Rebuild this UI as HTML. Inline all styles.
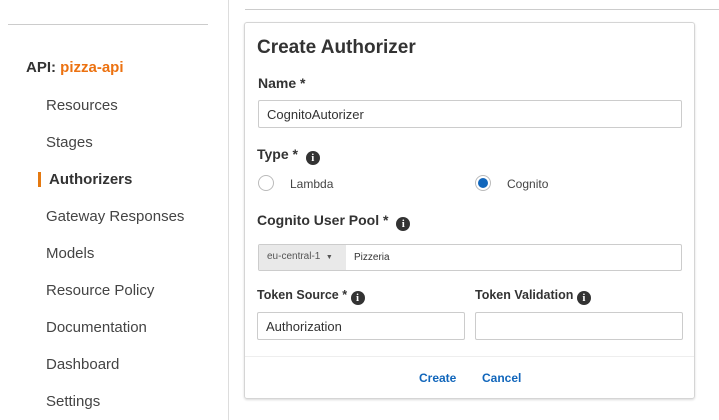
<!DOCTYPE html>
<html><head><style>
body{margin:0;width:719px;height:420px;background:#fff;font-family:"Liberation Sans",Arial,sans-serif;position:relative;overflow:hidden;color:#333}
.a{position:absolute;white-space:nowrap}
.nav{font-size:15px;color:#444;left:46px}
.lbl{font-weight:bold;font-size:14px;color:#333}
.inp{position:absolute;border:1px solid #ccc;border-radius:2px;box-sizing:border-box;background:#fff;font-size:13px;color:#333}
.i{display:inline-block;width:14px;height:14px;border-radius:50%;background:#333;color:#fff;font-size:11px;font-weight:bold;text-align:center;line-height:14px;font-family:"Liberation Serif",serif;vertical-align:-2px}
.r{position:absolute;width:16px;height:16px;border-radius:50%;border:1px solid #bbb;box-sizing:border-box;background:#fff}
</style></head><body>
<div class="a" style="left:8px;top:24px;width:200px;height:1px;background:#ccc"></div>
<div class="a" style="left:228px;top:0;width:1px;height:420px;background:#ddd"></div>
<div class="a" style="left:245px;top:9px;width:474px;height:1px;background:#ccc"></div>
<div class="a" style="left:26px;top:59px;font-size:15px;font-weight:bold;color:#333">API: <span style="color:#ec7211">pizza-api</span></div>
<div class="a nav" style="top:97px">Resources</div>
<div class="a nav" style="top:134px">Stages</div>
<div class="a" style="left:38px;top:172px;width:3px;height:15px;background:#e47911"></div>
<div class="a nav" style="top:171px;left:49px;font-weight:bold;color:#333">Authorizers</div>
<div class="a nav" style="top:208px">Gateway Responses</div>
<div class="a nav" style="top:245px">Models</div>
<div class="a nav" style="top:282px">Resource Policy</div>
<div class="a nav" style="top:319px">Documentation</div>
<div class="a nav" style="top:356px">Dashboard</div>
<div class="a nav" style="top:393px">Settings</div>

<div class="a" style="left:244px;top:22px;width:451px;height:377px;border:1px solid #d5d5d5;border-radius:3px;box-shadow:0 1px 2px rgba(0,0,0,.15);box-sizing:border-box"></div>
<div class="a" style="left:257px;top:37px;font-size:19px;font-weight:bold;color:#333">Create Authorizer</div>
<div class="a lbl" style="left:258px;top:75px">Name *</div>
<div class="inp" style="left:258px;top:100px;width:424px;height:28px;padding:6px 8px">CognitoAutorizer</div>
<div class="a lbl" style="left:257px;top:146px">Type * &nbsp;<span class="i">i</span></div>
<div class="r" style="left:258px;top:175px"></div>
<div class="a" style="left:290px;top:177px;font-size:12px;color:#444">Lambda</div>
<div class="r" style="left:475px;top:175px"><div style="position:absolute;left:2px;top:2px;width:10px;height:10px;border-radius:50%;background:#1166bb"></div></div>
<div class="a" style="left:507px;top:177px;font-size:12px;color:#444">Cognito</div>
<div class="a lbl" style="left:257px;top:212px">Cognito User Pool * &nbsp;<span class="i">i</span></div>
<div class="inp" style="left:258px;top:244px;width:424px;height:27px"></div>
<div class="a" style="left:259px;top:245px;width:87px;height:25px;background:#e9e9e9;font-size:10px;color:#555;line-height:24px;padding-left:8px;box-sizing:border-box">eu-central-1 &nbsp;<span style="font-size:7px">▼</span></div>
<div class="a" style="left:354px;top:252px;font-size:10px;color:#333">Pizzeria</div>
<div class="a" style="left:257px;top:288px;font-size:12.5px;font-weight:bold;color:#333">Token Source * <span class="i">i</span></div>
<div class="a" style="left:475px;top:288px;font-size:12.5px;font-weight:bold;color:#333">Token Validation <span class="i">i</span></div>
<div class="inp" style="left:257px;top:312px;width:208px;height:28px;padding:6px 8px">Authorization</div>
<div class="inp" style="left:475px;top:312px;width:208px;height:28px"></div>
<div class="a" style="left:245px;top:356px;width:449px;height:1px;background:#eee"></div>
<div class="a" style="left:419px;top:371px;font-size:12px;font-weight:bold;color:#1166bb">Create</div>
<div class="a" style="left:482px;top:371px;font-size:12px;font-weight:bold;color:#1166bb">Cancel</div>
</body></html>
